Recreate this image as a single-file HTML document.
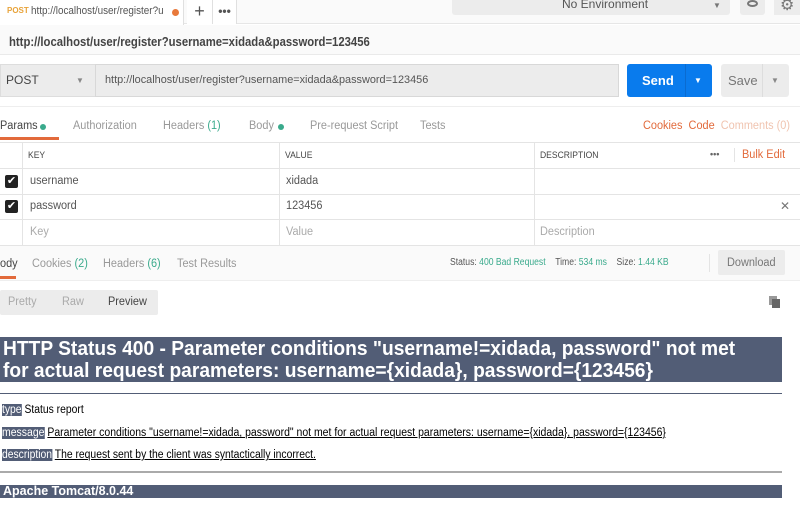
<!DOCTYPE html>
<html><head><meta charset="utf-8"><style>
*{margin:0;padding:0;box-sizing:border-box}
body{width:800px;height:509px;overflow:hidden;background:#fff;font-family:"Liberation Sans",sans-serif;color:#333;position:relative}
.a{position:absolute;white-space:nowrap}
.n{display:inline-block;transform:scaleX(.95);transform-origin:left center}
.g{color:#999}
.t{color:#3aaa8c}
.o{color:#e26a3b}
</style></head><body>
<div class="a" style="left:0;top:0;width:800px;height:24px;background:#fafafa;border-bottom:1px solid #e6e6e6"></div>
<div class="a" style="left:0;top:0;width:184px;height:25px;background:#fff;border-right:1px solid #e0e0e0"></div>
<div class="a" style="left:7px;top:6px;font-size:8px;font-weight:bold;color:#e8a33a">POST</div>
<div class="a" style="left:31px;top:5px;font-size:11px;color:#555"><span class="n" style="transform:scaleX(.9)">http://localhost/user/register?u</span></div>
<div class="a" style="left:172px;top:9px;width:7px;height:7px;border-radius:50%;background:#e8793b"></div>
<div class="a" style="left:187px;top:0;width:26px;height:24px;border-right:1px solid #e0e0e0;background:#fff;font-size:18px;text-align:center;line-height:22px;color:#555">+</div>
<div class="a" style="left:213px;top:0;width:24px;height:24px;border-right:1px solid #e0e0e0;background:#fff;font-size:12px;text-align:center;line-height:22px;color:#555;font-weight:bold">•••</div>
<div class="a" style="left:452px;top:0;width:278px;height:15px;background:#ececec;border-radius:0 0 3px 3px"></div>
<div class="a" style="left:562px;top:-3px;font-size:12px;color:#555">No Environment</div>
<div class="a" style="left:713px;top:1px;font-size:8px;color:#777">▼</div>
<div class="a" style="left:740px;top:0;width:25px;height:15px;background:#ececec;border-radius:0 0 3px 3px"></div>
<div class="a" style="left:747px;top:0;width:11px;height:7px;border:2px solid #777;border-radius:50%"></div>
<div class="a" style="left:774px;top:0;width:26px;height:15px;background:#ececec"></div>
<div class="a" style="left:780px;top:-5px;font-size:16px;color:#777">⚙</div>
<div class="a" style="left:0;top:25px;width:800px;height:30px;background:#fafafa;border-bottom:1px solid #eaeaea"></div>
<div class="a" style="left:9px;top:34px;font-size:13px;color:#444;font-weight:bold"><span class="n" style="transform:scaleX(.87)">http://localhost/user/register?username=xidada&amp;password=123456</span></div>
<div class="a" style="left:0;top:64px;width:95px;height:33px;background:#ececec;border:1px solid #ddd;border-right:none"></div>
<div class="a" style="left:6px;top:73px;font-size:12px;color:#444">POST</div>
<div class="a" style="left:76px;top:76px;font-size:8px;color:#888">▼</div>
<div class="a" style="left:95px;top:64px;width:524px;height:33px;background:#ececec;border:1px solid #d8d8d8"></div>
<div class="a" style="left:105px;top:74px;font-size:11px;color:#555"><span class="n" style="transform:scaleX(.99)">http://localhost/user/register?username=xidada&amp;password=123456</span></div>
<div class="a" style="left:627px;top:64px;width:85px;height:33px;background:#097bed;border-radius:3px"></div>
<div class="a" style="left:642px;top:73px;font-size:13px;font-weight:bold;color:#fff">Send</div>
<div class="a" style="left:685px;top:64px;width:1px;height:33px;background:#0a6bd0"></div>
<div class="a" style="left:694px;top:76px;font-size:8px;color:#fff">▼</div>
<div class="a" style="left:721px;top:64px;width:68px;height:33px;background:#ececec;border-radius:3px"></div>
<div class="a" style="left:728px;top:73px;font-size:13px;color:#777">Save</div>
<div class="a" style="left:762px;top:64px;width:1px;height:33px;background:#ddd"></div>
<div class="a" style="left:771px;top:76px;font-size:8px;color:#888">▼</div>
<div class="a" style="left:0;top:106px;width:800px;height:1px;background:#eee"></div>
<div class="a" style="left:0;top:120px;font-size:11.5px;color:#444"><span class="n">Params</span></div>
<div class="a" style="left:40px;top:124px;width:6px;height:6px;border-radius:50%;background:#3aaa8c"></div>
<div class="a" style="left:73px;top:120px;font-size:11.5px" ><span class="n g">Authorization</span></div>
<div class="a" style="left:163px;top:120px;font-size:11.5px"><span class="n"><span class="g">Headers </span><span class="t">(1)</span></span></div>
<div class="a" style="left:249px;top:120px;font-size:11.5px"><span class="n g">Body</span></div>
<div class="a" style="left:278px;top:124px;width:6px;height:6px;border-radius:50%;background:#3aaa8c"></div>
<div class="a" style="left:310px;top:120px;font-size:11.5px"><span class="n g">Pre-request Script</span></div>
<div class="a" style="left:420px;top:120px;font-size:11.5px"><span class="n g">Tests</span></div>
<div class="a" style="left:643px;top:120px;font-size:11.5px"><span class="n"><span class="o">Cookies</span>&nbsp;&nbsp;<span class="o">Code</span>&nbsp;&nbsp;<span style="color:#f0c4b0">Comments (0)</span></span></div>
<div class="a" style="left:0;top:137px;width:59px;height:3px;background:#e26a3b"></div>
<div class="a" style="left:0;top:142px;width:800px;height:104px;border-top:1px solid #e4e4e4"></div>
<div class="a" style="left:0;top:168px;width:800px;height:1px;background:#e4e4e4"></div>
<div class="a" style="left:0;top:194px;width:800px;height:1px;background:#e4e4e4"></div>
<div class="a" style="left:0;top:219px;width:800px;height:1px;background:#e4e4e4"></div>
<div class="a" style="left:0;top:245px;width:800px;height:1px;background:#e4e4e4"></div>
<div class="a" style="left:22px;top:143px;width:1px;height:102px;background:#e4e4e4"></div>
<div class="a" style="left:279px;top:143px;width:1px;height:102px;background:#e4e4e4"></div>
<div class="a" style="left:534px;top:143px;width:1px;height:102px;background:#e4e4e4"></div>
<div class="a" style="left:28px;top:150px;font-size:9px;color:#444"><span class="n">KEY</span></div>
<div class="a" style="left:285px;top:150px;font-size:9px;color:#444"><span class="n">VALUE</span></div>
<div class="a" style="left:540px;top:150px;font-size:9px;color:#444"><span class="n">DESCRIPTION</span></div>
<div class="a" style="left:710px;top:149px;font-size:9px;color:#666;font-weight:bold">•••</div>
<div class="a" style="left:734px;top:148px;width:1px;height:14px;background:#e4e4e4"></div>
<div class="a" style="left:742px;top:149px;font-size:11.5px"><span class="n o">Bulk Edit</span></div>
<div class="a" style="left:5px;top:175px;width:13px;height:13px;background:#222;border-radius:2px;color:#fff;font-size:11px;line-height:13px;text-align:center">✔</div>
<div class="a" style="left:5px;top:200px;width:13px;height:13px;background:#222;border-radius:2px;color:#fff;font-size:11px;line-height:13px;text-align:center">✔</div>
<div class="a" style="left:30px;top:175px;font-size:11.5px;color:#555"><span class="n">username</span></div>
<div class="a" style="left:286px;top:175px;font-size:11.5px;color:#555"><span class="n">xidada</span></div>
<div class="a" style="left:30px;top:200px;font-size:11.5px;color:#555"><span class="n">password</span></div>
<div class="a" style="left:286px;top:200px;font-size:11.5px;color:#555"><span class="n">123456</span></div>
<div class="a" style="left:780px;top:199px;font-size:12px;color:#777">✕</div>
<div class="a" style="left:30px;top:226px;font-size:11.5px;color:#aaa"><span class="n">Key</span></div>
<div class="a" style="left:286px;top:226px;font-size:11.5px;color:#aaa"><span class="n">Value</span></div>
<div class="a" style="left:540px;top:226px;font-size:11.5px;color:#aaa"><span class="n">Description</span></div>
<div class="a" style="left:0;top:246px;width:800px;height:35px;background:#fafafa;border-bottom:1px solid #eee"></div>
<div class="a" style="left:0;top:258px;font-size:11.5px;color:#444"><span class="n">ody</span></div>
<div class="a" style="left:0;top:276px;width:16px;height:3px;background:#e26a3b"></div>
<div class="a" style="left:32px;top:258px;font-size:11.5px"><span class="n"><span class="g">Cookies </span><span class="t">(2)</span></span></div>
<div class="a" style="left:103px;top:258px;font-size:11.5px"><span class="n"><span class="g">Headers </span><span class="t">(6)</span></span></div>
<div class="a" style="left:177px;top:258px;font-size:11.5px"><span class="n g">Test Results</span></div>
<div class="a" style="left:450px;top:257px;font-size:10px"><span class="n" style="transform:scaleX(.86)"><span style="color:#555">Status: </span><span class="t">400 Bad Request</span>&nbsp;&nbsp;&nbsp;&nbsp;<span style="color:#555">Time: </span><span class="t">534 ms</span>&nbsp;&nbsp;&nbsp;&nbsp;<span style="color:#555">Size: </span><span class="t">1.44 KB</span></span></div>
<div class="a" style="left:709px;top:254px;width:1px;height:18px;background:#e4e4e4"></div>
<div class="a" style="left:718px;top:250px;width:67px;height:25px;background:#ececec;border-radius:2px"></div>
<div class="a" style="left:727px;top:257px;font-size:11.5px;color:#777"><span class="n">Download</span></div>
<div class="a" style="left:0;top:290px;width:158px;height:25px;background:#ececec;border-radius:2px"></div>
<div class="a" style="left:8px;top:296px;font-size:11.5px;color:#aaa"><span class="n">Pretty</span></div>
<div class="a" style="left:62px;top:296px;font-size:11.5px;color:#aaa"><span class="n">Raw</span></div>
<div class="a" style="left:108px;top:296px;font-size:11.5px;color:#444"><span class="n">Preview</span></div>
<div class="a" style="left:769px;top:296px;width:8px;height:9px;background:#999"></div>
<div class="a" style="left:772px;top:299px;width:8px;height:9px;background:#666"></div>
<div class="a" style="left:0;top:337px;width:782px;height:45px;background:#525d76"></div>
<div class="a" style="left:3px;top:338px;font-size:20px;line-height:22px;font-weight:bold;color:#fff"><span class="n" style="transform:scaleX(.96)">HTTP Status 400 - Parameter conditions "username!=xidada, password" not met<br>for actual request parameters: username={xidada}, password={123456}</span></div>
<div class="a" style="left:0;top:393px;width:782px;height:1px;background:#525d76"></div>
<div class="a" style="left:2px;top:404px;font-size:11.5px;color:#000"><span class="n" style="transform:scaleX(.9)"><b style="background:#525d76;color:#fff;font-weight:normal">type</b> Status report</span></div>
<div class="a" style="left:2px;top:427px;font-size:11.5px;color:#000"><span class="n" style="transform:scaleX(.91)"><b style="background:#525d76;color:#fff;font-weight:normal">message</b> <u>Parameter conditions "username!=xidada, password" not met for actual request parameters: username={xidada}, password={123456}</u></span></div>
<div class="a" style="left:2px;top:449px;font-size:11.5px;color:#000"><span class="n" style="transform:scaleX(.9)"><b style="background:#525d76;color:#fff;font-weight:normal">description</b> <u>The request sent by the client was syntactically incorrect.</u></span></div>
<div class="a" style="left:0;top:471px;width:782px;height:2px;background:#aaa"></div>
<div class="a" style="left:0;top:485px;width:782px;height:13px;background:#525d76"></div>
<div class="a" style="left:3px;top:484px;font-size:12.5px;line-height:15px;font-weight:bold;color:#fff"><span class="n" style="transform:scaleX(1)">Apache Tomcat/8.0.44</span></div>
</body></html>
